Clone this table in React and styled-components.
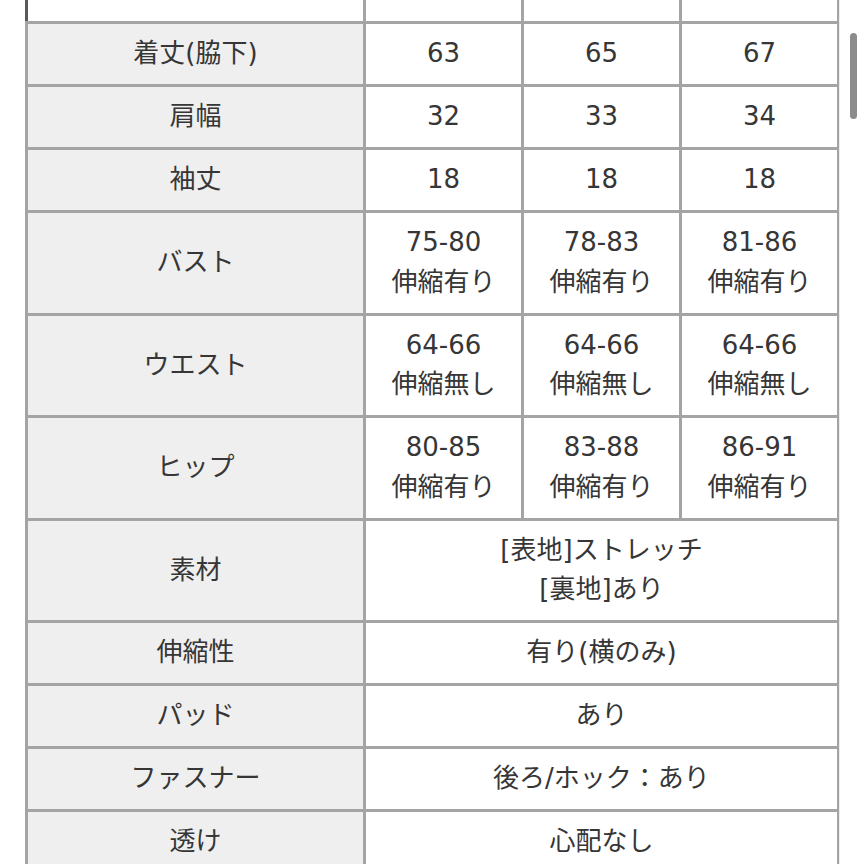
import React from "react";
import styled, { createGlobalStyle } from "styled-components";

const Global = createGlobalStyle`
  html, body { margin: 0; padding: 0; background: #ffffff; }
  body { overflow: hidden; }
  #root { width: 864px; height: 864px; overflow: hidden; position: relative; }
`;

const Page = styled.div`
  width: 864px;
  height: 864px;
  overflow: hidden;
  padding-left: 25px;
  box-sizing: border-box;
  position: relative;
  font-family: "DejaVu Sans", "Noto Sans CJK JP", sans-serif;
  color: #363636;
`;

const Table = styled.table`
  margin-top: -42px;
  width: 812px;
  border-collapse: collapse;
  table-layout: fixed;
  border: 3px solid #a4a4a4;
`;

const Cell = styled.td`
  border: 3px solid #a4a4a4;
  background: ${(p) => (p.$head ? "#efefef" : "#ffffff")};
  text-align: center;
  vertical-align: ${(p) => (p.$top ? "bottom" : "middle")};
  font-size: 26px;
  line-height: 39.5px;
  padding: 10.25px 4px;
  white-space: nowrap;
  ${(p) => (p.$darkLeft ? "border-left-color: #5a5a5a;" : "")}
`;

const Line = styled.div`
  display: block;
`;

const ScrollTrack = styled.div`
  position: absolute;
  top: 0;
  right: 0;
  width: 24px;
  height: 864px;
  border-left: 1px solid #ececec;
`;

const ScrollThumb = styled.div`
  position: absolute;
  top: 33px;
  left: 10px;
  width: 7px;
  height: 86px;
  border-radius: 4px;
  background: #8c8c8c;
`;

const rows = [
  { label: "着丈(脇下)", values: ["63", "65", "67"] },
  { label: "肩幅", values: ["32", "33", "34"] },
  { label: "袖丈", values: ["18", "18", "18"] },
  { label: "バスト", values: [["75-80", "伸縮有り"], ["78-83", "伸縮有り"], ["81-86", "伸縮有り"]] },
  { label: "ウエスト", values: [["64-66", "伸縮無し"], ["64-66", "伸縮無し"], ["64-66", "伸縮無し"]] },
  { label: "ヒップ", values: [["80-85", "伸縮有り"], ["83-88", "伸縮有り"], ["86-91", "伸縮有り"]] },
  { label: "素材", span: ["[表地]ストレッチ", "[裏地]あり"] },
  { label: "伸縮性", span: ["有り(横のみ)"] },
  { label: "パッド", span: ["あり"] },
  { label: "ファスナー", span: ["後ろ/ホック：あり"] },
  { label: "透け", span: ["心配なし"] },
];

const renderLines = (v) =>
  (Array.isArray(v) ? v : [v]).map((t, i) => <Line key={i}>{t}</Line>);

export default function App() {
  return (
    <>
      <Global />
      <Page>
        <Table>
          <colgroup>
            <col style={{ width: "338px" }} />
            <col style={{ width: "158px" }} />
            <col style={{ width: "158px" }} />
            <col style={{ width: "158px" }} />
          </colgroup>
          <tbody>
            <tr>
              <Cell $darkLeft $top></Cell>
              <Cell $top>S</Cell>
              <Cell $top>M</Cell>
              <Cell $top>L</Cell>
            </tr>
            {rows.map((r) => (
              <tr key={r.label}>
                <Cell $head>{r.label}</Cell>
                {r.span ? (
                  <Cell colSpan={3}>{renderLines(r.span)}</Cell>
                ) : (
                  r.values.map((v, i) => <Cell key={i}>{renderLines(v)}</Cell>)
                )}
              </tr>
            ))}
          </tbody>
        </Table>
        <ScrollTrack>
          <ScrollThumb />
        </ScrollTrack>
      </Page>
    </>
  );
}
